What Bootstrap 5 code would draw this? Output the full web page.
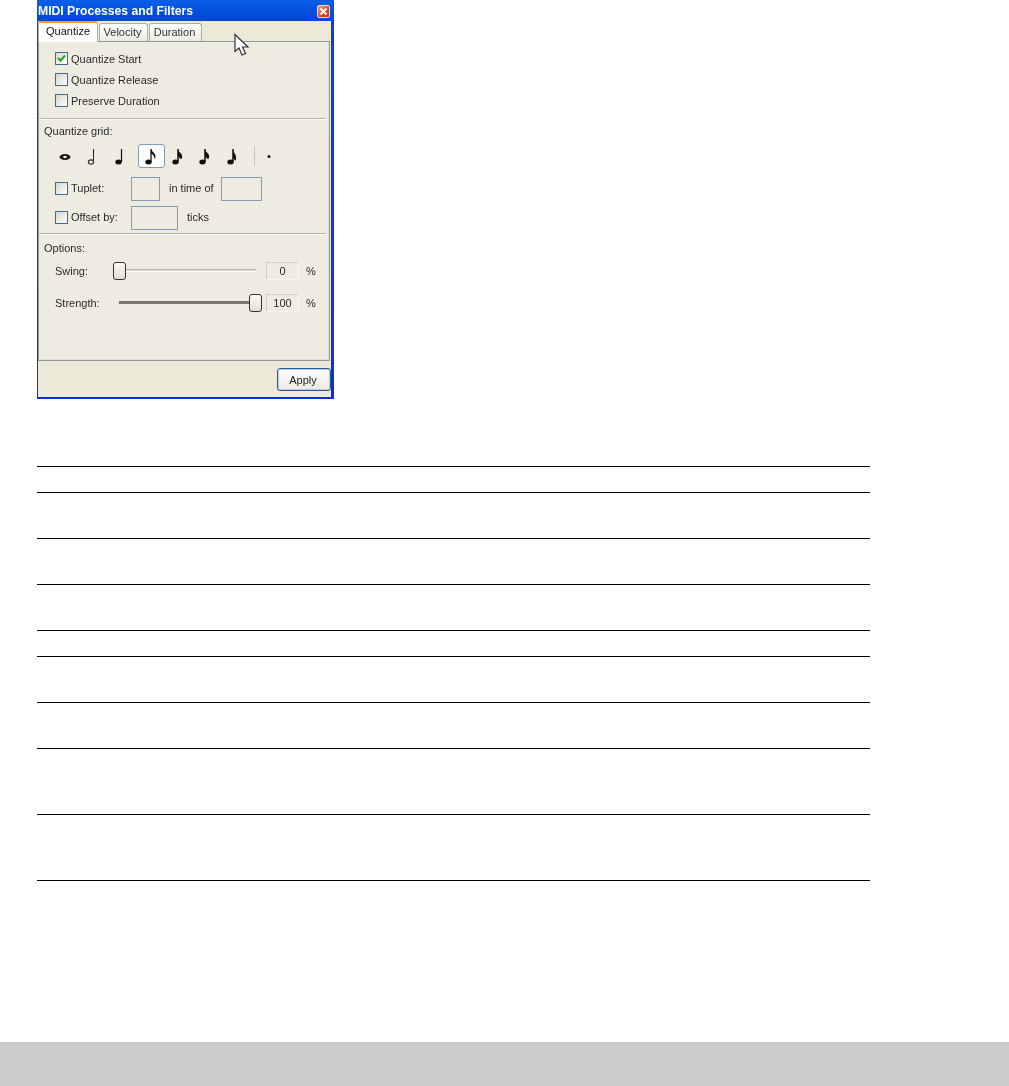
<!doctype html>
<html lang="en">
<head>
<meta charset="utf-8">
<title>MIDI Processes and Filters</title>
<link href="https://cdn.jsdelivr.net/npm/bootstrap@5.3.0/dist/css/bootstrap.min.css" rel="stylesheet">
<style>
html,body{height:1086px;overflow:hidden;background:#fff}
.page-wrap{position:relative;height:1086px;display:flex;flex-direction:column}
.xp-win{width:297px;height:399px;margin-left:37px;display:flex;flex-direction:column;background:linear-gradient(#0a5fe6,#0250dc 12px,#0248cf 20px,#0831d9);padding:0 3px 2px 1px;font:11px/14px "Liberation Sans",sans-serif;color:#2a2a2a;flex:none;filter:blur(.4px)}
.xp-title{height:21px;flex:none;display:flex;align-items:center;justify-content:space-between;color:#fff;font-weight:700;font-size:12.2px;padding:1px 0 0 0}
.xp-close{width:13px;height:13px;margin-right:1px;background:linear-gradient(135deg,#f0a08a,#d9471f 60%,#c23412);border:1px solid #f4d8cf;border-radius:2px;display:flex}
.xp-close svg,.xp-box svg{display:block}
.xp-body{flex:1;background:#ece9d8;display:flex;flex-direction:column;min-height:0}
.xp-tabs{border:0;height:20px;flex:none;align-items:flex-end;position:relative;z-index:1;padding-left:0;flex-wrap:nowrap}
.xp-tabs .nav-link{font-size:11px;line-height:14px;color:#333;padding:1px 2px 0 0;height:18px;width:49px;text-align:center;border:1px solid #a3b0b5;border-bottom:0;border-radius:3px 3px 0 0;background:linear-gradient(#fff,#ecebe2);margin:0 1px 0 0}
.xp-tabs .nav-link.active{height:21px;width:60px;padding:1px 0 0 0;margin-bottom:-1px;border:0;border-top:2px solid #f0a028;border-left:1px solid #a3b0b5;border-right:1px solid #a3b0b5;background:#fff;color:#111;position:relative}
.xp-tabs .tab-third{width:53px}
.xp-panel{width:292px;height:320px;flex:none;border:1px solid #919b9c;background:#eeebe0;padding:6px 0 0 0;display:flex;flex-direction:column;box-shadow:inset -1px -1px 0 #ddd}
.chk-row{height:21px;flex:none;display:flex;align-items:center;padding-left:16px;gap:3px}
.xp-box{width:13px;height:13px;flex:none;border:1px solid #3f6a92;background:linear-gradient(135deg,#d6d6ce,#fff);display:block}
.xp-sep{height:1px;flex:none;background:#b9b5a4;border:0;margin:0 3px 0 0;opacity:1;box-shadow:0 1px 0 #fff}
.sec-label{height:14px;flex:none;padding-left:5px}
.note-strip{height:24px;flex:none;margin-top:6px;padding-left:13px;display:flex;align-items:center}
.note-cell{width:27px;height:24px;flex:none;display:block}
.note-cell.on{background:#fff;border:1px solid #7f9db9;border-radius:3px}
.note-div{width:1px;height:20px;background:#c9c6b4;margin:0 8px;flex:none}
.note-gap{width:5px;flex:none}
.form-line{height:25px;flex:none;display:flex;align-items:center;padding-left:16px;line-height:13px}
.xp-inp{height:24px;border:1px solid #7f9db9;background:transparent;flex:none;display:block}
.w-a{width:29px}.w-b{width:41px}.w-c{width:47px}
.lab-a,.lab-b{width:63px;padding-left:3px;padding-bottom:1px;flex:none}
.mid-lab{width:61px;padding-left:9px;flex:none}
.tick-lab{padding-left:9px}
.opt-line{height:20px;flex:none;display:flex;align-items:center;position:relative}
.opt-name{width:74px;padding-left:16px;flex:none}
.track-box{width:152px;height:20px;flex:none;position:relative}
.track-line{position:absolute;left:5px;right:9px;top:8px;height:3px;background:#dcd9c8;border-top:1px solid #b9b6a6;border-bottom:1px solid #fff}
.track-line.dark{background:#77776c;border-color:#77776c;left:6px;right:15px}
.thumb-knob{position:absolute;top:1px;width:13px;height:18px;border:1px solid #333;border-radius:3px;background:linear-gradient(#fbfaf5,#e2dfd0)}
.knob-min{left:0}
.knob-max{left:136px}
.val-box{width:33px;height:18px;margin-left:1px;flex:none;border:1px solid #d5d2c3;border-right-color:#f6f5ee;border-bottom-color:#f6f5ee;text-align:center;line-height:17px}
.pct-lab{padding-left:7px}
.xp-foot{flex:1;display:flex;justify-content:flex-end;align-items:flex-start;padding-top:7px}
.xp-apply{width:54px;height:23px;font-size:11px;line-height:14px;padding:0 2px 0 0;color:#222;border:1px solid #2c5a9e;border-radius:3px;background:linear-gradient(#fff,#ece9e0);box-shadow:inset 0 0 0 1px #b4cdee}
.xp-cursor{position:absolute;left:232px;top:32px;width:18px;height:25px;z-index:5;filter:blur(.3px)}
.rule-table{width:833px;margin:67px 0 0 37px;flex:none;--bs-table-bg:transparent;border-top:1px solid #000}
.rule-table td{padding:0;border-bottom:1px solid #000;border-color:#000}
.h25{height:26px}.h45{height:46px}.h65{height:66px}
.foot-band{margin-top:auto;height:44px;flex:none;background:#cbcbcb}
.sep-one{margin-top:7px;margin-bottom:5px}
.line-tuplet{margin-top:8px}
.line-offset{margin-top:4px}
.sep-two{margin-top:3px;margin-bottom:7px}
.line-swing{margin-top:6px}
.line-strength{margin-top:12px}
.dot-cell{margin-left:-1px}
</style>
</head>
<body>
<div class="page-wrap">
  <div class="xp-win">
    <div class="xp-title"><span>MIDI Processes and Filters</span>
      <span class="xp-close"><svg width="11" height="11" viewBox="0 0 11 11"><path d="M2.500 2.500l6 6M8.500 2.500l-6 6" stroke="#fff" stroke-width="2"/></svg></span>
    </div>
    <div class="xp-body">
      <ul class="nav nav-tabs xp-tabs">
        <li class="nav-item"><a class="nav-link active" href="#">Quantize</a></li>
        <li class="nav-item"><a class="nav-link" href="#">Velocity</a></li>
        <li class="nav-item"><a class="nav-link tab-third" href="#">Duration</a></li>
      </ul>
      <div class="xp-panel">
        <div class="chk-row"><span class="xp-box"><svg width="11" height="11" viewBox="0 0 11 11"><path d="M2 5l2.500 2.500L9 2.500" fill="none" stroke="#21a121" stroke-width="2"/></svg></span><span>Quantize Start</span></div>
        <div class="chk-row"><span class="xp-box"></span><span>Quantize Release</span></div>
        <div class="chk-row"><span class="xp-box"></span><span>Preserve Duration</span></div>
        <hr class="xp-sep sep-one">
        <div class="sec-label">Quantize grid:</div>
        <div class="note-strip">
          <svg class="note-cell" viewBox="0 0 27 24"><ellipse cx="13" cy="13" rx="5.500" ry="3" fill="#111"/><ellipse cx="13" cy="13" rx="1.800" ry="1.300" fill="#eeebe0"/></svg>
          <svg class="note-cell" viewBox="0 0 27 24"><path d="M14.500 5v13" stroke="#222"/><ellipse cx="12" cy="18" rx="2.600" ry="2.100" fill="none" stroke="#333" stroke-width="1.200"/></svg>
          <svg class="note-cell" viewBox="0 0 27 24"><path d="M15.500 5v13" stroke="#111" stroke-width="1.200"/><ellipse cx="12.500" cy="18" rx="3.200" ry="2.500" fill="#111"/></svg>
          <span class="note-gap"></span>
          <svg class="note-cell on" viewBox="0 0 25 22"><path d="M12 4v13" stroke="#111" stroke-width="1.300"/><path d="M12 4c1 3 4.500 4 4.500 7.500 0 1-.3 2-.9 2.800 0-3-1.800-5-3.600-5.800z" fill="#111"/><ellipse cx="9.500" cy="17" rx="3.200" ry="2.500" fill="#111"/></svg>
          <svg class="note-cell" viewBox="0 0 27 24"><path d="M13 5v13" stroke="#111" stroke-width="1.500"/><path d="M13 6c1 2.500 4.200 3.500 4.200 6.500 0 1-.5 2-1.200 2.800l-3-2.800z" fill="#111"/><ellipse cx="10.500" cy="18" rx="3.200" ry="2.500" fill="#111"/></svg>
          <svg class="note-cell" viewBox="0 0 27 24"><path d="M13 5v13" stroke="#111" stroke-width="1.500"/><path d="M13 6c1 2.500 4.200 3.500 4.200 6.500 0 1-.5 2-1.200 2.800l-3-2.800z" fill="#111"/><ellipse cx="10.500" cy="18" rx="3.200" ry="2.500" fill="#111"/></svg>
          <svg class="note-cell" viewBox="0 0 27 24"><path d="M14 5v13" stroke="#111" stroke-width="1.500"/><path d="M14 6c.8 3 3.200 4.500 3.200 8 0 1-.3 2-.9 2.800l-2.300-2.800z" fill="#111"/><ellipse cx="11.500" cy="18" rx="3.200" ry="2.500" fill="#111"/></svg>
          <span class="note-div"></span>
          <svg class="note-cell dot-cell" viewBox="0 0 27 24"><circle cx="7" cy="12.500" r="1.500" fill="#111"/></svg>
        </div>
        <div class="form-line line-tuplet"><span class="xp-box"></span><span class="lab-a">Tuplet:</span><span class="xp-inp w-a"></span><span class="mid-lab">in time of</span><span class="xp-inp w-b"></span></div>
        <div class="form-line line-offset"><span class="xp-box"></span><span class="lab-b">Offset by:</span><span class="xp-inp w-c"></span><span class="tick-lab">ticks</span></div>
        <hr class="xp-sep sep-two">
        <div class="sec-label">Options:</div>
        <div class="opt-line line-swing"><span class="opt-name">Swing:</span><span class="track-box"><span class="track-line"></span><span class="thumb-knob knob-min"></span></span><span class="val-box">0</span><span class="pct-lab">%</span></div>
        <div class="opt-line line-strength"><span class="opt-name">Strength:</span><span class="track-box"><span class="track-line dark"></span><span class="thumb-knob knob-max"></span></span><span class="val-box">100</span><span class="pct-lab">%</span></div>
      </div>
      <div class="xp-foot"><button type="button" class="btn xp-apply">Apply</button></div>
    </div>
  </div>
  <svg class="xp-cursor" viewBox="0 0 18 25"><path d="M3 2.500v17l4-3.500 3 7 3.500-1.500-3-6.500h5.500z" fill="#fff" stroke="#333" stroke-width="1.200"/></svg>
  <table class="table rule-table mb-0">
    <tbody>
      <tr class="h25"><td></td></tr>
      <tr class="h45"><td></td></tr>
      <tr class="h45"><td></td></tr>
      <tr class="h45"><td></td></tr>
      <tr class="h25"><td></td></tr>
      <tr class="h45"><td></td></tr>
      <tr class="h45"><td></td></tr>
      <tr class="h65"><td></td></tr>
      <tr class="h65"><td></td></tr>
    </tbody>
  </table>
  <div class="foot-band"></div>
</div>
</body>
</html>
